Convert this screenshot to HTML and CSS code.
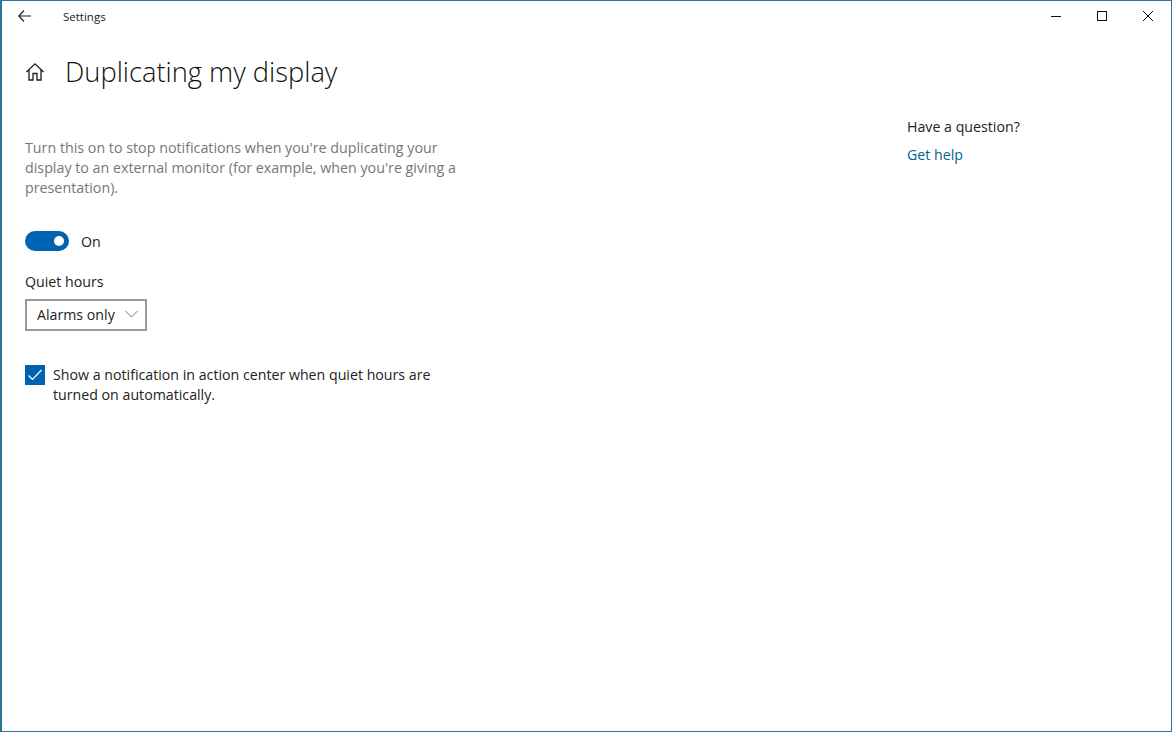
FILE: index.html
```html
<!DOCTYPE html>
<html lang="en">
<head>
<meta charset="utf-8">
<title>Settings</title>
<link rel="stylesheet" href="styles.css">
</head>
<body>
<div class="window">
  <header class="titlebar">
    <div class="title-left">
      <svg class="back" width="16" height="14" viewBox="0 0 16 14"><path d="M7 1.500 1.800 7l5.200 5.500M1.800 7H14" fill="none" stroke="#1a1a1a" stroke-width="1.100"/></svg>
      <span class="app-name">Settings</span>
    </div>
    <div class="controls">
      <svg width="12" height="12" viewBox="0 0 12 12"><path d="M1 6.500H11" stroke="#111" stroke-width="1"/></svg>
      <svg width="12" height="12" viewBox="0 0 12 12"><rect x="1.500" y="1.500" width="9" height="9" fill="none" stroke="#111" stroke-width="1"/></svg>
      <svg width="12" height="12" viewBox="0 0 12 12"><path d="M1 1 11 11M11 1 1 11" stroke="#111" stroke-width="1"/></svg>
    </div>
  </header>
  <div class="page">
    <main class="content">
      <div class="heading">
        <svg class="home" width="20" height="20" viewBox="0 0 20 20"><path d="M1.500 10 10 1.800 18.500 10M4 8V18H8V11.500H12V18H16V8" fill="none" stroke="#1a1a1a" stroke-width="1.300"/></svg>
        <h1>Duplicating my display</h1>
      </div>
      <p class="desc">Turn this on to stop notifications when you're duplicating your display to an external monitor (for example, when you're giving a presentation).</p>
      <div class="toggle-row">
        <span class="toggle"><span class="knob"></span></span>
        <span class="toggle-label">On</span>
      </div>
      <div class="field-label">Quiet hours</div>
      <div class="select">
        <span>Alarms only</span>
        <svg width="13" height="8" viewBox="0 0 13 8"><path d="M.5 1 6.500 7l6-6" fill="none" stroke="#777" stroke-width="1"/></svg>
      </div>
      <div class="check-row">
        <span class="checkbox"><svg width="20" height="20" viewBox="0 0 20 20"><path d="M3.500 10.500 7.500 14.500 16.500 5" fill="none" stroke="#fff" stroke-width="1.200"/></svg></span>
        <span class="check-label">Show a notification in action center when quiet hours are turned on automatically.</span>
      </div>
    </main>
    <aside class="side">
      <div class="question">Have a question?</div>
      <a class="help" href="#">Get help</a>
    </aside>
  </div>
</div>
</body>
</html>
```
FILE: styles.css
```css
* { box-sizing: border-box; }
html, body { margin: 0; padding: 0; }
body {
  font-family: "Open Sans", "Noto Sans", sans-serif;
  background: #fff;
  color: #1a1a1a;
}
.window {
  width: 1172px;
  height: 732px;
  border: 1px solid #2f7396;
  border-left-width: 2px;
  overflow: hidden;
}
.titlebar {
  display: flex;
  justify-content: space-between;
  align-items: center;
  height: 30px;
}
.title-left { display: flex; align-items: center; }
.back { margin-left: 15px; }
.app-name { margin-left: 30px; font-size: 11.500px; color: #222; }
.controls { display: flex; gap: 34px; margin-right: 17px; }
.page { display: flex; }
.content { width: 905px; padding-left: 23px; }
.heading { display: flex; align-items: center; margin-top: 23px; height: 36px; }
h1 {
  margin: 0 0 0 20px;
  font-size: 27.300px;
  font-weight: 300;
  line-height: 36px;
  color: #111;
}
.desc {
  width: 440px;
  margin: 48px 0 0;
  font-size: 14.280px;
  line-height: 20px;
  color: #767676;
}
.toggle-row { display: flex; align-items: center; margin-top: 33px; height: 20px; }
.toggle {
  display: flex;
  align-items: center;
  justify-content: flex-end;
  width: 44px;
  height: 20px;
  border-radius: 10px;
  background: #0063b1;
  padding-right: 5px;
}
.knob { width: 10px; height: 10px; border-radius: 50%; background: #fff; }
.toggle-label { margin-left: 12px; font-size: 14.200px; color: #222; }
.field-label { margin-top: 21px; font-size: 14.200px; line-height: 20px; color: #222; }
.select {
  display: flex;
  align-items: center;
  gap: 10px;
  width: 122px;
  height: 32px;
  margin-top: 7px;
  padding: 0 0 2px 10px;
  border: 2px solid #999;
  font-size: 14.200px;
  color: #222;
}
.check-row { display: flex; margin-top: 34px; }
.checkbox { flex: none; width: 20px; height: 20px; background: #0063b1; }
.checkbox svg { display: block; }
.check-label { width: 390px; margin-left: 8px; font-size: 14.200px; line-height: 20px; color: #222; }
.side { padding-top: 86px; }
.question { font-size: 14.200px; line-height: 20px; color: #222; }
.help { display: block; margin-top: 8px; font-size: 14.200px; line-height: 20px; color: #006396; text-decoration: none; }
```
